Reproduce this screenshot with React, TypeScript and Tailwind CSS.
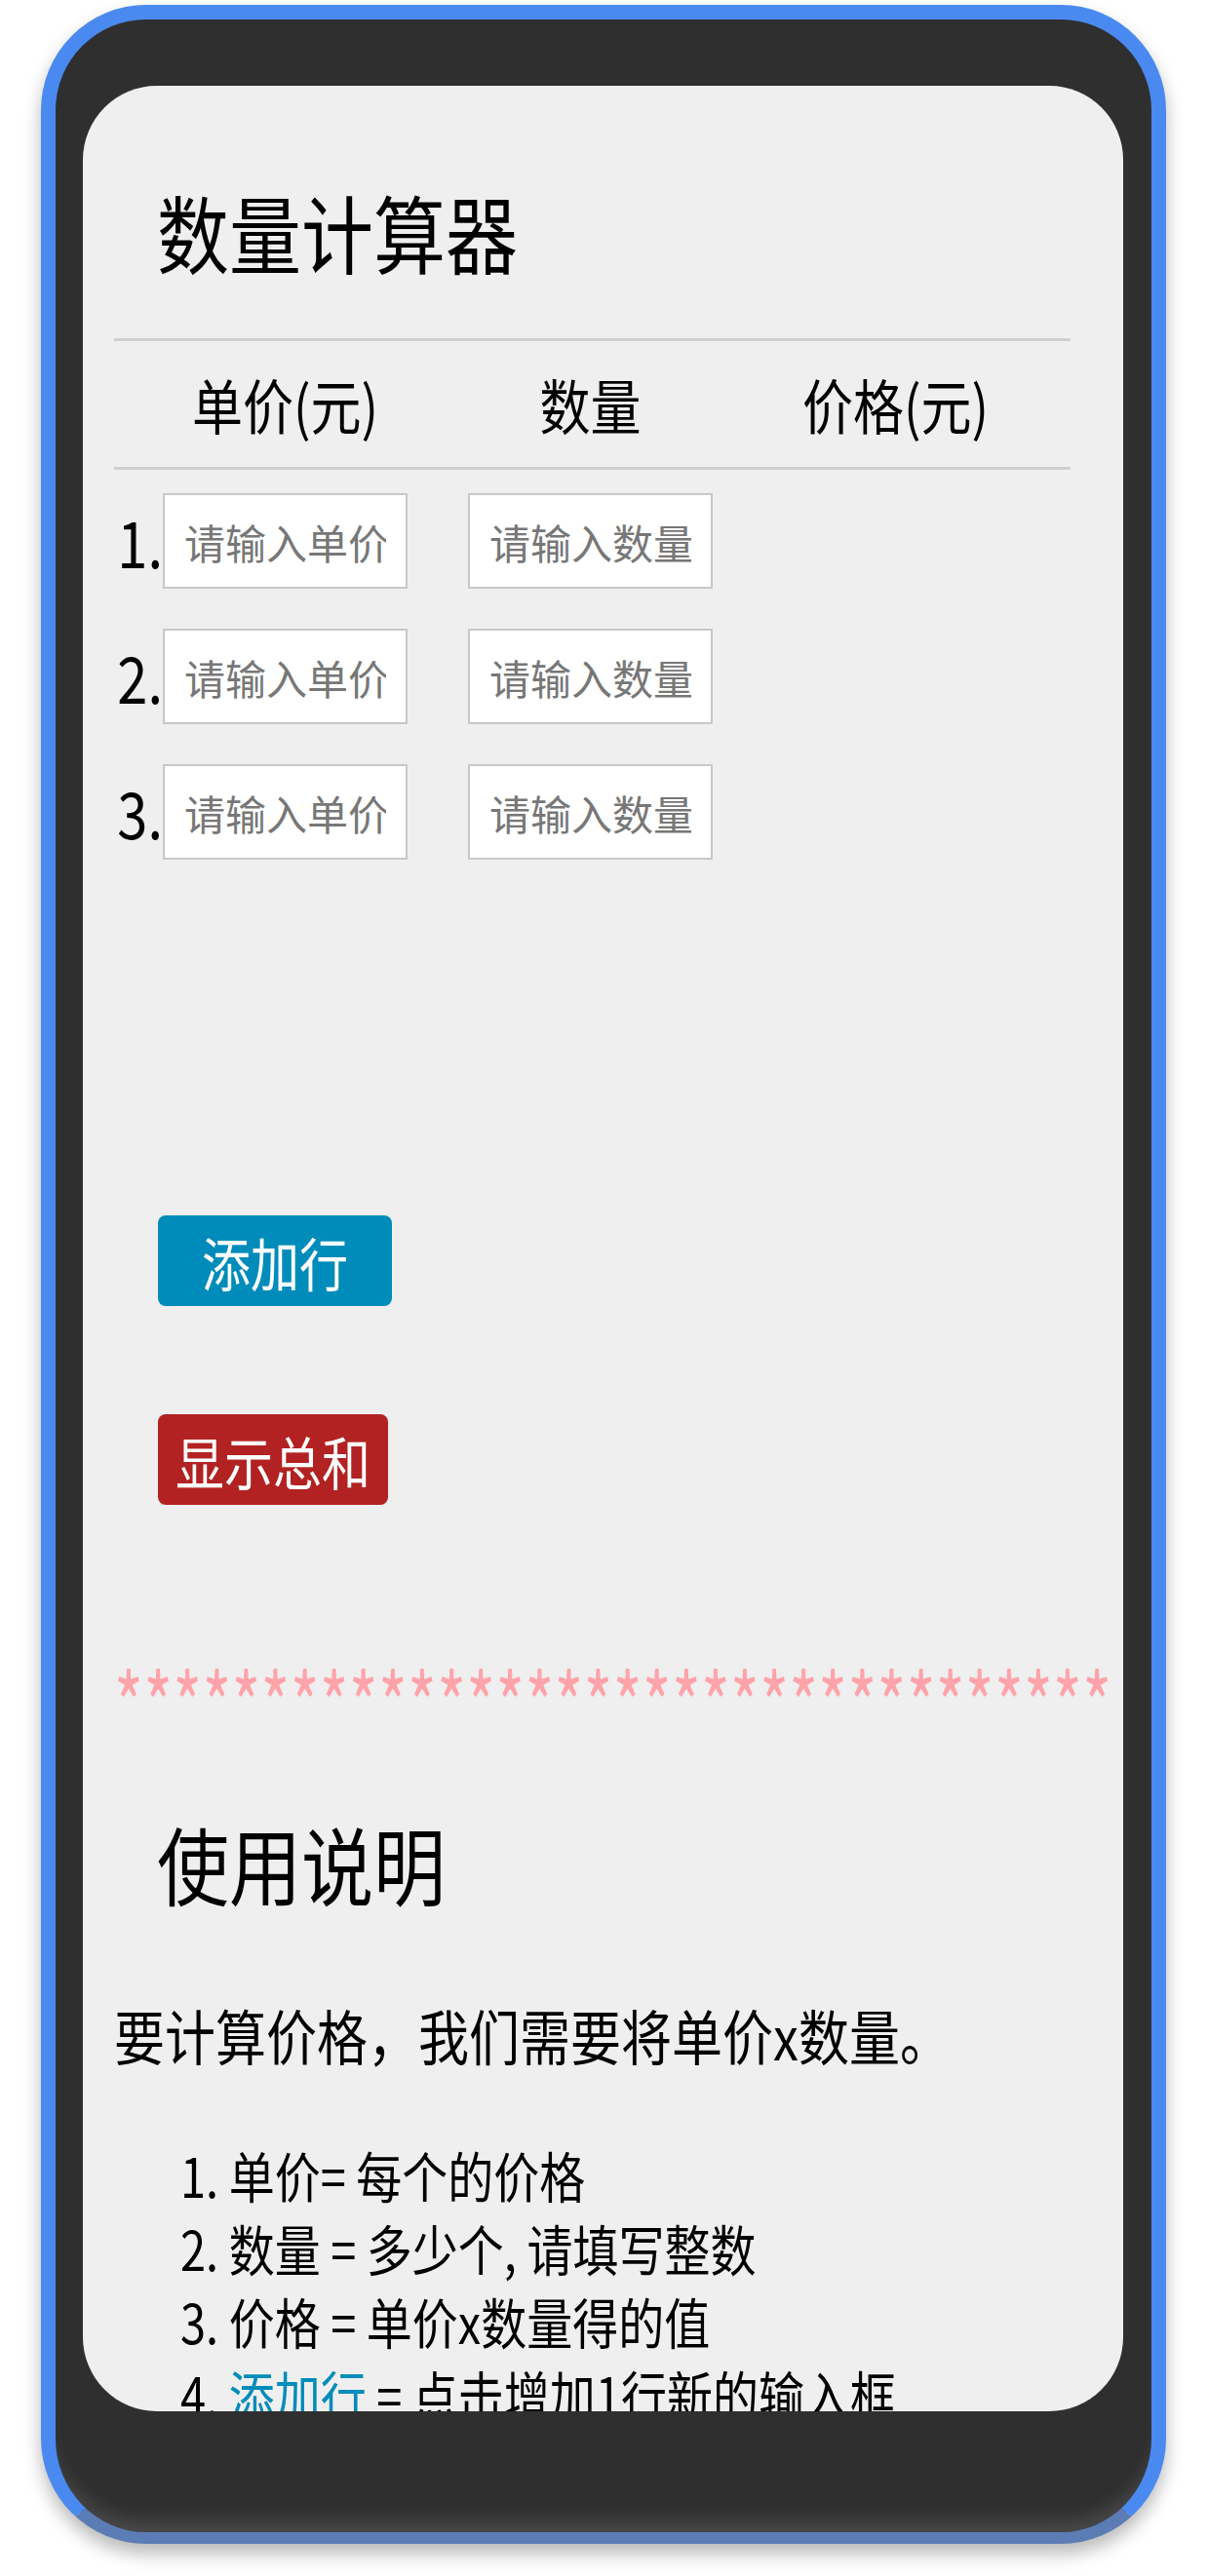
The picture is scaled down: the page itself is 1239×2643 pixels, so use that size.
const font = "font-['Noto_Sans_CJK_SC','Noto_Sans',sans-serif]";
// the reference text is drawn a little taller than the font's own shape
const tall = "inline-block scale-y-[1.18]";

const rows = [1, 2, 3];
const stars = Array.from({ length: 34 }, (_, i) => i);

const inputCls = `h-[98px] w-[251px] border-2 border-[#c8c8c8] bg-white px-[20px] text-[42px] outline-none placeholder:text-[#777] ${font}`;

const Row = ({ n }: { n: number }) => (
  <div className="grid grid-cols-[50px_313px_313px_313px] items-center">
    <span className="text-right text-[56px] leading-none text-black">
      <span className={tall}>{n}.</span>
    </span>
    <input className={inputCls} placeholder="请输入单价" />
    <input className={inputCls} placeholder="请输入数量" />
    <span />
  </div>
);

export default function App() {
  return (
    <div className={`min-h-[2643px] bg-white pl-[42px] pt-[5px] ${font}`}>
      {/* phone frame */}
      <div className="h-[2605px] w-[1154px] rounded-[108px] border-[15px] border-b-[12px] border-[#4a89f0] border-b-[#5b7cb4] bg-[#2f2f2f] pb-[124px] pl-[28px] pr-[29px] pt-[68px] shadow-[inset_0_-22px_18px_-10px_rgba(255,255,255,0.12),0_10px_18px_rgba(0,0,0,0.28)]">
        <div className="h-full w-full overflow-hidden rounded-[76px] bg-[#efefef]">
          <div className="ml-[32px] w-[981px] text-black">
            <h1 className="mt-[99px] pl-[44px] text-[74px] leading-[100px] font-normal">
              <span className={tall}>数量计算器</span>
            </h1>

            <div className="mt-[60px] h-[3px] bg-[#cfcfcf]" />
            <div className="grid h-[129px] grid-cols-[50px_313px_313px_313px] items-center text-[52px]">
              <span />
              <span className="w-[251px] text-center"><span className={tall}>单价(元)</span></span>
              <span className="w-[251px] text-center"><span className={tall}>数量</span></span>
              <span className="w-[251px] text-center"><span className={tall}>价格(元)</span></span>
            </div>
            <div className="h-[3px] bg-[#cfcfcf]" />

            <div className="mt-[24px] flex flex-col gap-[41px]">
              {rows.map((n) => (
                <Row key={n} n={n} />
              ))}
            </div>

            <button className="ml-[45px] mt-[365px] flex h-[93px] w-[240px] items-center justify-center rounded-[8px] bg-[#008cba] text-[50px] leading-none text-white">
              <span className={tall}>添加行</span>
            </button>
            <button className="ml-[45px] mt-[111px] flex h-[93px] w-[236px] items-center justify-center rounded-[8px] bg-[#b22222] text-[50px] leading-none text-white">
              <span className={tall}>显示总和</span>
            </button>

            <div className="mt-[168px] flex h-[66px] scale-y-[1.4] text-[64px] leading-none text-[#ffa3aa]">
              {stars.map((i) => (
                <span key={i} className="w-[30.1px] shrink-0 text-center">*</span>
              ))}
            </div>

            <h2 className="mt-[83px] pl-[44px] text-[74px] leading-[100px] font-normal">
              <span className={tall}>使用说明</span>
            </h2>
            <p className="mt-[87px] text-[52px] leading-[80px]">
              <span className={tall}>要计算价格，我们需要将单价x数量。</span>
            </p>

            <ol className="mt-[65px] pl-[68px] text-[47px] leading-[75px]">
              <li><span className={tall}>1. 单价= 每个的价格</span></li>
              <li><span className={tall}>2. 数量 = 多少个, 请填写整数</span></li>
              <li><span className={tall}>3. 价格 = 单价x数量得的值</span></li>
              <li>
                <span className={tall}>
                  4. <span className="text-[#008cba]">添加行</span> = 点击增加1行新的输入框
                </span>
              </li>
            </ol>
          </div>
        </div>
      </div>
    </div>
  );
}
